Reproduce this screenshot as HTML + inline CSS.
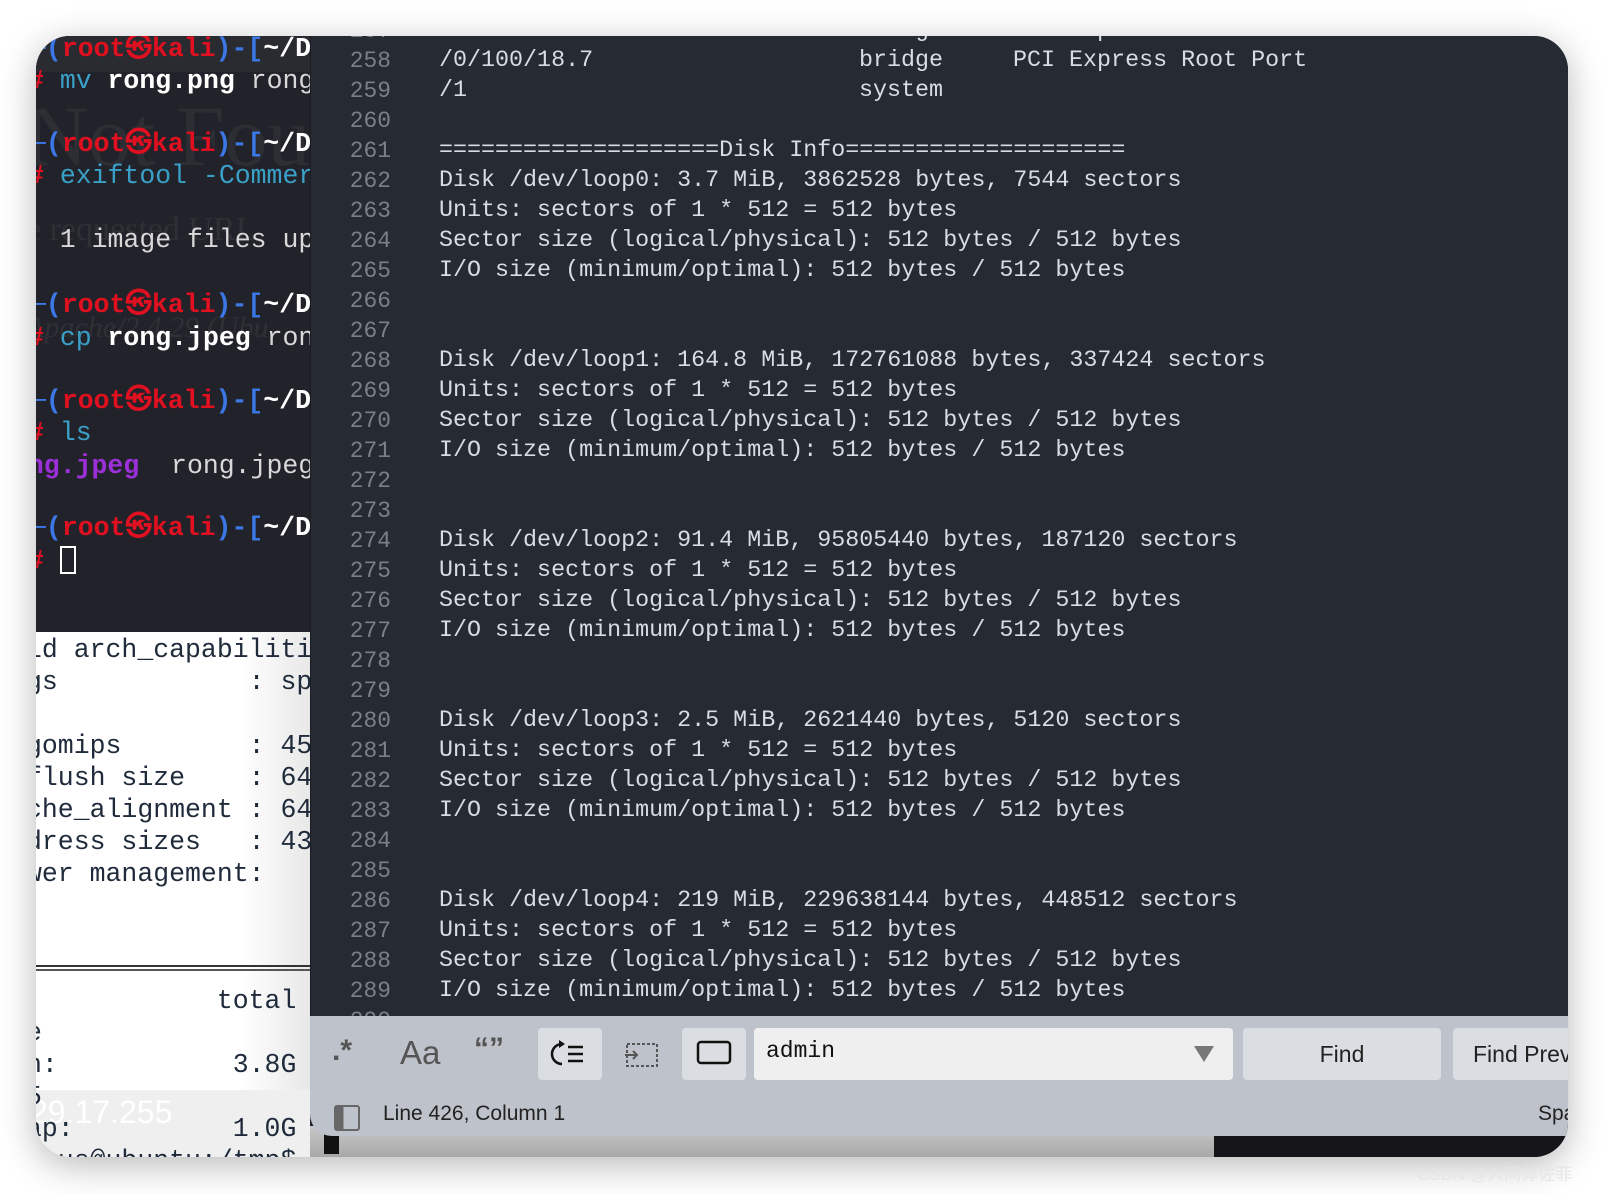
<!DOCTYPE html>
<html><head><meta charset="utf-8"><style>
html,body{margin:0;padding:0;background:#fff;}
body{width:1604px;height:1194px;position:relative;overflow:hidden;}
.win{position:absolute;left:36px;top:36px;width:1532px;height:1121px;border-radius:34px;overflow:hidden;box-shadow:0 8px 36px rgba(0,0,0,.28);background:#22232a;}
.abs{position:absolute;white-space:pre;}
.t{font-family:"Liberation Mono",monospace;font-size:26.5px;font-weight:bold;line-height:32px;}
.b{color:#3b78e6}.r{color:#e01020}.w{color:#fff}.c{color:#3aa0c8}.g{color:#d8d8d8;font-weight:normal}.p{color:#9b2fd8}
.term2{font-family:"Liberation Mono",monospace;font-size:26.5px;color:#1f2a3a;line-height:32px;}
.ed{position:absolute;left:274px;top:0;width:1258px;height:980px;background:#252a33;border-left:1px solid #1a1d23;}
.ln{position:absolute;left:0;width:80px;text-align:right;color:#7b8088;font-family:"Liberation Mono",monospace;font-size:22.9px;line-height:30px;}
.tx{position:absolute;left:128px;color:#d8dde4;font-family:"Liberation Mono",monospace;font-size:23.35px;line-height:30px;white-space:pre;}
.panel{position:absolute;left:274px;top:980px;width:1258px;height:120px;background:#bec2ca;border-bottom-left-radius:22px;}
.btn{position:absolute;top:12px;height:52px;background:#dadde2;border-radius:4px;}
.sans{font-family:"Liberation Sans",sans-serif;}
</style></head><body>
<div class="win">
  <div class="abs" style="left:0;top:0;width:274px;height:596px;background:#22232a;"></div>
  <div class="abs" style="left:0;top:0;width:274px;height:36px;background:#2a2b31;"></div>
  <div class="abs" style="left:-10px;top:50px;font-family:'Liberation Serif',serif;font-size:86px;color:rgba(255,255,255,0.05);">Not Found</div>
  <div class="abs" style="left:-10px;top:175px;font-family:'Liberation Serif',serif;font-size:34px;color:rgba(255,255,255,0.06);">e requested URL</div>
  <div class="abs" style="left:-10px;top:275px;font-family:'Liberation Serif',serif;font-style:italic;font-size:30px;color:rgba(255,255,255,0.06);">Apache/2.4.29 (Ubu</div>
  <div class="abs t" style="left:-6px;top:-3px;"><span class="b">─(</span><span class="r">root㉿kali</span><span class="b">)-[</span><span class="w">~/D</span></div>
  <div class="abs t" style="left:-8px;top:29px;"><span class="r"># </span><span class="c" style="font-weight:normal">mv</span> <span class="w">rong.png</span> <span class="g">rong</span></div>
  <div class="abs t" style="left:-6px;top:92px;"><span class="b">─(</span><span class="r">root㉿kali</span><span class="b">)-[</span><span class="w">~/D</span></div>
  <div class="abs t" style="left:-8px;top:124px;"><span class="r"># </span><span class="c" style="font-weight:normal">exiftool -Commer</span></div>
  <div class="abs t" style="left:-8px;top:188px;"><span class="g">  1 image files up</span></div>
  <div class="abs t" style="left:-6px;top:253px;"><span class="b">─(</span><span class="r">root㉿kali</span><span class="b">)-[</span><span class="w">~/D</span></div>
  <div class="abs t" style="left:-8px;top:286px;"><span class="r"># </span><span class="c" style="font-weight:normal">cp</span> <span class="w">rong.jpeg</span> <span class="g">ron</span></div>
  <div class="abs t" style="left:-6px;top:349px;"><span class="b">─(</span><span class="r">root㉿kali</span><span class="b">)-[</span><span class="w">~/D</span></div>
  <div class="abs t" style="left:-8px;top:381px;"><span class="r"># </span><span class="c" style="font-weight:normal">ls</span></div>
  <div class="abs t" style="left:-24px;top:414px;"><span class="p">ong.jpeg</span>  <span class="g">rong.jpeg</span></div>
  <div class="abs t" style="left:-6px;top:476px;"><span class="b">─(</span><span class="r">root㉿kali</span><span class="b">)-[</span><span class="w">~/D</span></div>
  <div class="abs t" style="left:-8px;top:509px;"><span class="r">#</span></div>
  <div class="abs" style="left:24px;top:510px;width:12px;height:24px;border:2px solid #fff;"></div>
  <div class="abs" style="left:0;top:596px;width:274px;height:525px;background:linear-gradient(to right,#fff 75%,#e8e8e8);"></div>
  <div class="abs" style="left:0;top:929px;width:274px;height:2px;background:#333;"></div>
  <div class="abs" style="left:0;top:933px;width:274px;height:2px;background:#555;"></div>
  <div class="abs" style="left:0;top:1054px;width:274px;height:67px;background:#efefef;"></div>
  <div class="abs" style="left:-6px;top:1058px;font-family:'Liberation Sans',sans-serif;font-size:32px;color:#fff;">29.17.255</div>
  <div class="abs term2" style="left:-10px;top:598px;">ld arch_capabiliti
gs            : sp

gomips        : 45
flush size    : 64
che_alignment : 64
dress sizes   : 43
wer management:</div>
  <div class="abs term2" style="left:-10px;top:949px;">            total
e
n:           3.8G
5
ap:          1.0G
 ous@ubuntu:/tmp$</div>
  <div class="ed">
    <div class="ln" style="top:-20px;">257
258
259
260
261
262
263
264
265
266
267
268
269
270
271
272
273
274
275
276
277
278
279
280
281
282
283
284
285
286
287
288
289
290</div>
    <div class="tx" style="top:-20px;">/0/100/18.6
/0/100/18.7
/1

====================Disk Info====================
Disk /dev/loop0: 3.7 MiB, 3862528 bytes, 7544 sectors
Units: sectors of 1 * 512 = 512 bytes
Sector size (logical/physical): 512 bytes / 512 bytes
I/O size (minimum/optimal): 512 bytes / 512 bytes


Disk /dev/loop1: 164.8 MiB, 172761088 bytes, 337424 sectors
Units: sectors of 1 * 512 = 512 bytes
Sector size (logical/physical): 512 bytes / 512 bytes
I/O size (minimum/optimal): 512 bytes / 512 bytes


Disk /dev/loop2: 91.4 MiB, 95805440 bytes, 187120 sectors
Units: sectors of 1 * 512 = 512 bytes
Sector size (logical/physical): 512 bytes / 512 bytes
I/O size (minimum/optimal): 512 bytes / 512 bytes


Disk /dev/loop3: 2.5 MiB, 2621440 bytes, 5120 sectors
Units: sectors of 1 * 512 = 512 bytes
Sector size (logical/physical): 512 bytes / 512 bytes
I/O size (minimum/optimal): 512 bytes / 512 bytes


Disk /dev/loop4: 219 MiB, 229638144 bytes, 448512 sectors
Units: sectors of 1 * 512 = 512 bytes
Sector size (logical/physical): 512 bytes / 512 bytes
I/O size (minimum/optimal): 512 bytes / 512 bytes</div>
    <div class="tx" style="top:-20px;left:548px;">bridge
bridge
system</div>
    <div class="tx" style="top:-20px;left:702px;">PCI Express Root Port
PCI Express Root Port</div>
  </div>
  <div class="abs" style="left:274px;top:1090px;width:904px;height:31px;background:linear-gradient(to bottom,#c8c8c8,#a8a8a8);"></div>
  <div class="abs" style="left:1178px;top:1090px;width:354px;height:31px;background:#15151a;"></div>
  <div class="abs" style="left:288px;top:1098px;width:15px;height:20px;background:#111;"></div>
  <div class="panel">
    <div class="abs sans" style="left:22px;top:18px;font-size:30px;color:#555;font-weight:bold;">.*</div>
    <div class="abs sans" style="left:90px;top:18px;font-size:33px;color:#555;">Aa</div>
    <div class="abs sans" style="left:164px;top:16px;font-size:30px;color:#555;font-weight:bold;">“”</div>
    <div class="btn" style="left:228px;width:64px;">
      <svg width="64" height="52" viewBox="0 0 64 52"><path d="M24 16 A10 10 0 1 0 24 36" fill="none" stroke="#111" stroke-width="2.5"/><path d="M21 12 L27 16 L21 20 Z" fill="#111"/><path d="M30 19h15M30 26h15M30 33h15" stroke="#111" stroke-width="2.5"/></svg>
    </div>
    <svg class="abs" style="left:314px;top:26px;" width="36" height="26" viewBox="0 0 36 26"><rect x="3" y="2" width="30" height="22" fill="none" stroke="#555" stroke-width="2" stroke-dasharray="3 2"/><path d="M1 13h12M9 9l4 4-4 4" fill="none" stroke="#555" stroke-width="2"/></svg>
    <div class="btn" style="left:372px;width:64px;">
      <svg width="64" height="52" viewBox="0 0 64 52"><rect x="16" y="14" width="32" height="21" rx="3" fill="none" stroke="#111" stroke-width="2.5"/></svg>
    </div>
    <div class="btn" style="left:444px;width:479px;background:#efefef;">
      <div class="abs" style="left:12px;top:10px;font-family:'Liberation Mono',monospace;font-size:23px;color:#111;">admin</div>
      <svg class="abs" style="left:440px;top:18px;" width="20" height="16" viewBox="0 0 20 16"><path d="M0 0h20L10 16z" fill="#777"/></svg>
    </div>
    <div class="btn" style="left:933px;width:198px;"><div class="abs sans" style="left:0;width:198px;text-align:center;top:13px;font-size:23px;color:#222;">Find</div></div>
    <div class="btn" style="left:1143px;width:140px;"><div class="abs sans" style="left:20px;top:13px;font-size:23px;color:#222;">Find Prev</div></div>
    <div class="abs" style="left:24px;top:89px;width:22px;height:22px;border:2px solid #666;border-radius:3px;background:linear-gradient(to right,#666 35%,transparent 35%);"></div>
    <div class="abs sans" style="left:73px;top:86px;font-size:21px;color:#222;">Line 426, Column 1</div>
    <div class="abs sans" style="left:1228px;top:86px;font-size:21px;color:#222;">Spaces</div>
  </div>
</div>
<div class="abs" style="left:1417px;top:1160px;font-family:'Liberation Sans','Noto Sans CJK SC',sans-serif;font-size:17px;color:#e6e6e6;">CSDN @人间体佐菲</div>
</body></html>
